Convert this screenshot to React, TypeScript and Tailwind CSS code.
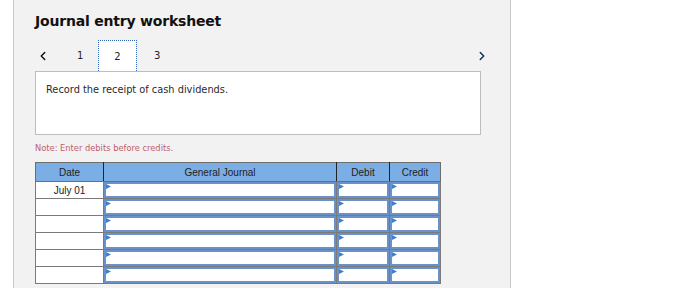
import { ChevronLeft, ChevronRight } from 'lucide-react'

const rows = ['July 01', '', '', '', '', '']

function Flag() {
  return (
    <svg className="absolute left-0 top-0" width="5" height="5" viewBox="0 0 5 5">
      <polygon points="0,0 5,2.5 0,5" fill="#3f7fd0" />
    </svg>
  )
}

function EntryCell() {
  return (
    <td className="h-[17px] border border-[#7a7a7a] p-0">
      <div className="relative h-[16px] border-2 border-[#6892c8] bg-white">
        <Flag />
      </div>
    </td>
  )
}

export default function App() {
  return (
    <div className="h-[294px] w-[674px] overflow-hidden bg-white font-['DejaVu_Sans',sans-serif] text-[#222]">
      <div className="ml-[13px] h-[288px] w-[498px] border-x border-[#c9c9c9] bg-[#f2f2f2] pl-[21px]">
        <h1 className="pt-[12px] text-[14px] font-bold leading-[18px] tracking-[-0.2px] text-[#111]">Journal entry worksheet</h1>

        <div className="mt-[10px] flex h-[31px] items-center pr-[21px]">
          <ChevronLeft className="ml-[1px] h-[14px] w-[14px] text-[#111]" strokeWidth={2.5} />
          <span className="ml-[27px] w-[8px] text-[10px]">1</span>
          <div className="ml-[13px] flex h-[31px] w-[39px] items-center justify-center self-end border-x border-t border-dotted border-[#2d63b0] bg-white text-[10px]">
            2
          </div>
          <span className="ml-[17px] text-[10px]">3</span>
          <ChevronRight className="ml-auto h-[14px] w-[14px] text-[#10305a]" strokeWidth={2.5} />
        </div>

        <div className="h-[64px] w-[446px] border border-[#bdbdbd] bg-white px-[10px] pt-[11px] text-[9.8px] leading-[14px] text-[#2a2a2a]">
          Record the receipt of cash dividends.
        </div>

        <p className="mt-[7px] text-[8.3px] leading-[12px] text-[#c0606c]">Note: Enter debits before credits.</p>

        <table className="mt-[8px] w-[405px] table-fixed border-collapse border border-[#6e6e6e] font-['Liberation_Sans',Arial,sans-serif] text-[10px] text-[#222]">
          <colgroup>
            <col className="w-[68px]" />
            <col className="w-[233px]" />
            <col className="w-[53px]" />
            <col className="w-[51px]" />
          </colgroup>
          <thead>
            <tr className="h-[19px] bg-[#7aaee4]">
              <th className="border border-[#6e6e6e] border-r-[#222] p-0 font-normal">Date</th>
              <th className="border border-[#6e6e6e] border-r-[#222] p-0 font-normal">General Journal</th>
              <th className="border border-[#6e6e6e] border-r-[#222] p-0 font-normal">Debit</th>
              <th className="border border-[#6e6e6e] p-0 font-normal">Credit</th>
            </tr>
          </thead>
          <tbody>
            {rows.map((date, i) => (
              <tr key={i} className="h-[17px]">
                <td className="border border-[#7a7a7a] bg-white p-0 text-center text-[10px]">{date}</td>
                <EntryCell />
                <EntryCell />
                <EntryCell />
              </tr>
            ))}
          </tbody>
        </table>
      </div>
    </div>
  )
}
